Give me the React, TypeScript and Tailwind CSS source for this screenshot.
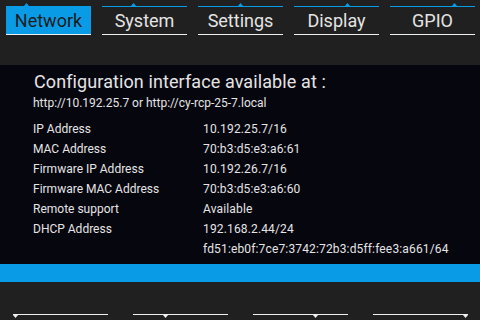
import React from 'react'

const tabs = [
  { label: 'Network', active: true, caret: 18 },
  { label: 'System', active: false, caret: 29 },
  { label: 'Settings', active: false, caret: 40 },
  { label: 'Display', active: false, caret: 51 },
  { label: 'GPIO', active: false, caret: 62 },
]

const rows = [
  ['IP Address', '10.192.25.7/16'],
  ['MAC Address', '70:b3:d5:e3:a6:61'],
  ['Firmware IP Address', '10.192.26.7/16'],
  ['Firmware MAC Address', '70:b3:d5:e3:a6:60'],
  ['Remote support', 'Available'],
  ['DHCP Address', '192.168.2.44/24'],
  ['', 'fd51:eb0f:7ce7:3742:72b3:d5ff:fee3:a661/64'],
]

// softkey markers along the bottom edge
const softkeys = [0, 30, 60, 90]

function CaretUp({ left }: { left: number }) {
  return (
    <svg
      className="absolute -top-[3px]"
      style={{ left }}
      width="5"
      height="3"
      viewBox="0 0 5 3"
    >
      <polygon points="2.5,0 5,3 0,3" fill="#0a9be6" />
    </svg>
  )
}

function CaretDown({ left }: { left: number }) {
  return (
    <svg
      className="absolute top-[1px]"
      style={{ left }}
      width="5"
      height="3"
      viewBox="0 0 5 3"
    >
      <polygon points="0,0 5,0 2.5,3" fill="#f0f0f0" />
    </svg>
  )
}

export default function App() {
  return (
    <div className="w-[480px] h-[320px] flex flex-col overflow-hidden font-['Roboto',sans-serif] bg-[#202020]">
      {/* Tabs */}
      <div className="h-[65px] bg-[#202020] flex gap-[11px] pl-[6px] pt-[6px]">
        {tabs.map((tab) => (
          <div key={tab.label} className="relative w-[85px] h-[29px] flex flex-col">
            <CaretUp left={tab.caret} />
            <div className="h-px bg-[#0a9be6]" />
            <div
              className={`h-[27px] flex items-center justify-center text-[18px] leading-none ${
                tab.active ? 'bg-[#0a9be6] text-[#1c1c1c]' : 'text-[#e4e4e4]'
              }`}
            >
              {tab.label}
            </div>
            <div className="h-px bg-[#f0f0f0]" />
          </div>
        ))}
      </div>

      {/* Info */}
      <div className="h-[199px] bg-[#06060f] pl-[33px] pt-[6px] text-[#e4e4e4]">
        <div className="text-[18px] leading-[21px] pl-px tracking-[0.1px]">Configuration interface available at :</div>
        <div className="text-[12px] leading-[15px] mt-[4px]">http://10.192.25.7 or http://cy-rcp-25-7.local</div>
        <div className="mt-[8px] flex flex-col">
          {rows.map(([label, value], i) => (
            <div key={i} className="h-5 flex items-center text-[12px]">
              <div className="w-[170px]">{label}</div>
              <div className="tracking-[0.15px]">{value}</div>
            </div>
          ))}
        </div>
      </div>

      {/* Status bar */}
      <div className="h-[18px] bg-[#0a9be6]" />

      {/* Softkeys */}
      <div className="flex-1 bg-[#202020] flex gap-[25px] pl-[13px] pt-[32px]">
        {softkeys.map((caret, i) => (
          <div key={i} className="relative w-[95px] h-px bg-[#f0f0f0]">
            <CaretDown left={caret} />
          </div>
        ))}
      </div>
    </div>
  )
}
